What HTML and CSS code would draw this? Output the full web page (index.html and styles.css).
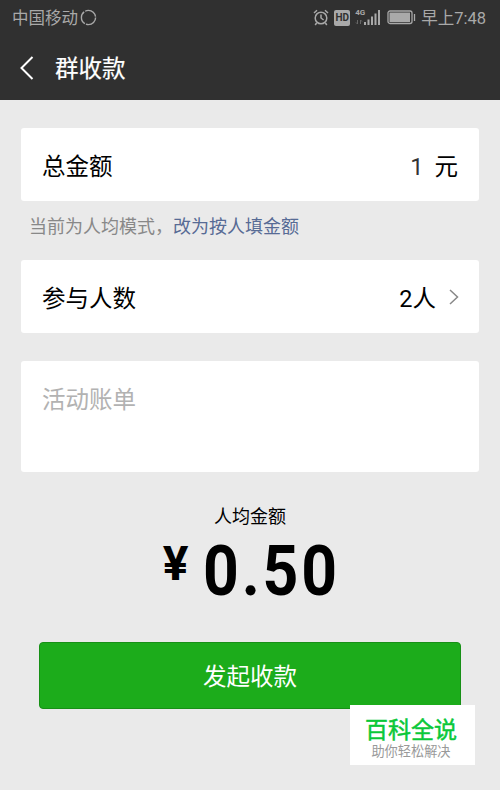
FILE: index.html
```html
<!DOCTYPE html>
<html lang="zh-CN">
<head>
    <meta charset="UTF-8">
    <meta name="viewport" content="width=device-width, initial-scale=1.0">
    <title>群收款</title>
    <link rel="stylesheet" href="styles.css">
</head>
<body>
    <header>
        <div class="status-bar">
            <div class="carrier">
                <span>中国移动</span>
                <svg width="17" height="17" viewBox="0 0 17 17">
                    <circle cx="8.5" cy="8.5" r="7.1" stroke-dasharray="13.7 1.17"/>
                </svg>
            </div>
            <div class="status-icons">
                <svg class="alarm" width="16" height="17" viewBox="0 0 16 17">
                    <circle cx="8" cy="9" r="5.8"/>
                    <path d="M8 5.5V9l2.6 2M1 4l3-2.8M15 4l-3-2.8M3.6 14l-1.4 2M12.4 14l1.4 2"/>
                </svg>
                <span class="hd">HD</span>
                <div class="signal">
                    <span class="network">4G</span>
                    <svg width="26" height="17" viewBox="0 0 26 17">
                        <path class="data" d="M2.5 11v4M1 13.5L2.5 15M5.5 15v-4M5.5 11L7 12.5"/>
                        <path class="bars" d="M10 13v3M13.5 10.5V16M17 7.5V16M20.5 4.5V16M24 1v15"/>
                    </svg>
                </div>
                <svg class="battery" width="29" height="15" viewBox="0 0 29 15">
                    <rect x="1" y="1" width="24" height="12.5" rx="2"/>
                    <rect class="level" x="2.5" y="2.5" width="20.5" height="9.5"/>
                    <path d="M27.5 4v7"/>
                </svg>
                <span class="time">早上7:48</span>
            </div>
        </div>
        <div class="nav-bar">
            <svg class="back" width="14" height="24" viewBox="0 0 14 24">
                <path d="M12.5 1L1.5 12l11 11"/>
            </svg>
            <h1>群收款</h1>
        </div>
    </header>

    <main>
        <div class="card row">
            <span>总金额</span>
            <div class="total"><span class="number">1</span><span>元</span></div>
        </div>
        <p class="hint">当前为人均模式，<a>改为按人填金额</a></p>

        <div class="card row people">
            <span>参与人数</span>
            <div class="count">
                <span>2人</span>
                <svg width="10" height="16" viewBox="0 0 10 16">
                    <path d="M1 1l7.5 7L1 15"/>
                </svg>
            </div>
        </div>

        <div class="card note">活动账单</div>

        <div class="average">
            <div class="average-label">人均金额</div>
            <div class="amount"><span class="currency">¥</span><span class="value">0.50</span></div>
        </div>

        <button>发起收款</button>
    </main>

    <div class="watermark">
        <div class="brand">百科全说</div>
        <div class="slogan">助你轻松解决</div>
    </div>
</body>
</html>
```
FILE: styles.css
```css
:root {
    --dark: #303030;
    --background: #eaeaea;
    --status: #a9a9a9;
    --green: #1cac1b;
}

* {
    box-sizing: border-box;
    margin: 0;
    padding: 0;
}

body {
    position: relative;
    height: 790px;
    overflow: hidden;
    background: var(--background);
    color: #000;
    font-family: Roboto, "Noto Sans CJK SC", sans-serif;
    font-size: 23.5px;
    line-height: 1;
}

svg {
    display: block;
    fill: none;
    stroke: currentColor;
}

/* Header */
header {
    height: 100px;
    background: var(--dark);
    color: #fff;
}

.status-bar {
    display: flex;
    justify-content: space-between;
    align-items: center;
    height: 35px;
    padding: 0 14px 0 12px;
    color: var(--status);
    font-size: 16.5px;
}

.carrier,
.status-icons {
    display: flex;
    align-items: center;
}

.carrier {
    gap: 2px;
}

.carrier span,
.time {
    padding-top: 3px;
}

.carrier svg {
    stroke-width: 1.4;
}

.alarm {
    stroke-width: 1.5;
}

.hd {
    width: 16px;
    height: 16px;
    margin: 0 5px;
    border-radius: 2px;
    background: var(--status);
    color: var(--dark);
    font-size: 10px;
    font-weight: 700;
    line-height: 16px;
    text-align: center;
}

.signal {
    position: relative;
    margin-right: 6px;
}

.network {
    position: absolute;
    top: 0;
    left: 0;
    font-size: 8px;
    font-weight: 700;
}

.data {
    stroke: #666;
}

.bars {
    stroke-width: 2;
}

.battery {
    margin-right: 5px;
    stroke-width: 1.3;
}

.level {
    fill: currentColor;
    stroke: none;
}

.nav-bar {
    display: flex;
    align-items: center;
    gap: 21px;
    height: 65px;
    padding-left: 20px;
}

.back {
    stroke-width: 2;
}

h1 {
    padding-top: 4px;
    font-size: 23.5px;
    font-weight: 400;
    -webkit-text-stroke: 0.2px;
}

/* Form */
main {
    padding: 28px 21px 0;
}

.card {
    background: #fff;
    border-radius: 3px;
}

.row {
    display: flex;
    justify-content: space-between;
    align-items: center;
    height: 73px;
    padding: 0 21px;
}

.row span {
    padding-top: 6px;
}

.total,
.count {
    display: flex;
    align-items: center;
}

.total {
    gap: 11px;
}

.number {
    color: #333;
}

.count {
    gap: 13px;
}

.count svg {
    margin-right: -1px;
    color: #888;
    stroke-width: 1.5;
}

.hint {
    margin: 16px 0 0 8px;
    color: #888;
    font-size: 18px;
    line-height: 20px;
}

.hint a {
    color: #576b95;
}

.people {
    margin-top: 23px;
}

.note {
    height: 111px;
    margin-top: 28px;
    padding: 28px 21px;
    color: #b2b2b2;
}

.average {
    margin-top: 36px;
    text-align: center;
}

.average-label {
    font-size: 18px;
}

.amount {
    display: flex;
    align-items: flex-start;
    justify-content: center;
    gap: 15px;
    height: 72px;
    margin-top: 9px;
    font-weight: 700;
}

.currency {
    padding-top: 5px;
    font-size: 48px;
}

/* narrow digits with wide gaps */
.value {
    width: 134px;
    font-size: 71px;
    line-height: 71px;
    letter-spacing: 3.2px;
    text-align: left;
    transform: scaleX(0.88);
    transform-origin: left;
}

button {
    display: block;
    width: 422px;
    height: 67px;
    margin: 35px auto 0;
    padding-top: 5px;
    border: 1px solid #179016;
    border-radius: 4px;
    background: var(--green);
    color: #fff;
    font: inherit;
}

/* Watermark in the corner */
.watermark {
    position: absolute;
    right: 25px;
    bottom: 25px;
    width: 125px;
    height: 60px;
    padding: 14px 3px 0 0;
    background: #fff;
    text-align: center;
}

.brand {
    color: #0ac839;
    font-size: 23px;
    -webkit-text-stroke: 0.5px;
}

.slogan {
    margin-top: 3px;
    color: #999;
    font-size: 13.2px;
}
```
